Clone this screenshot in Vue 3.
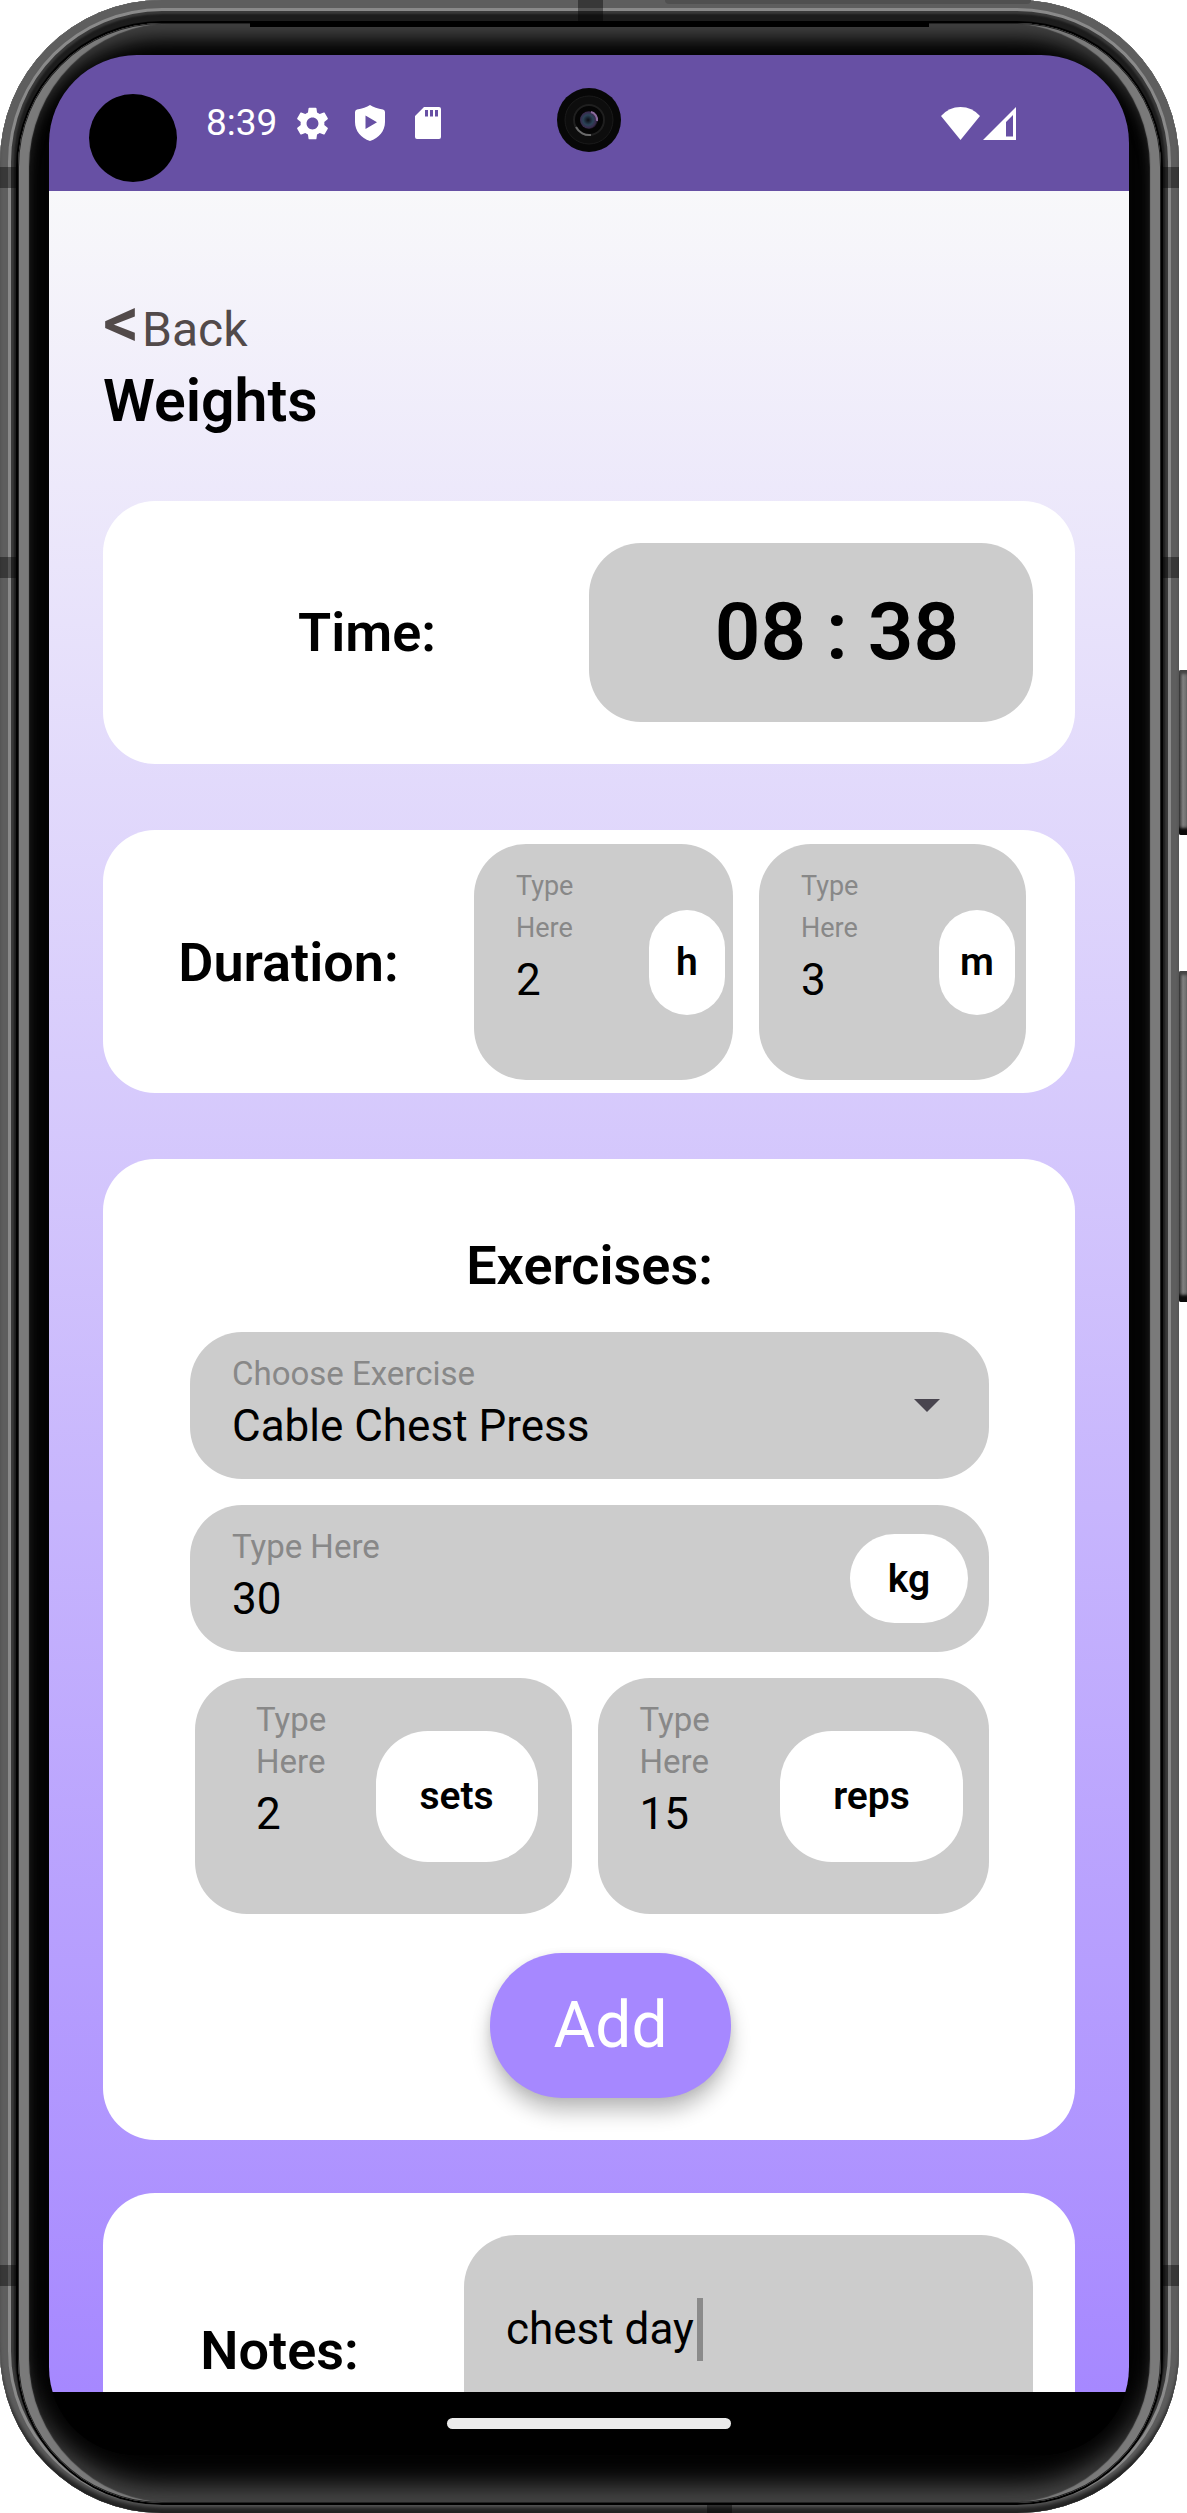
<script setup>
import { ref } from 'vue'

const hours = ref('2')
const minutes = ref('3')
const exercise = ref('Cable Chest Press')
const weight = ref('30')
const sets = ref('2')
const reps = ref('15')
const notes = ref('chest day')
</script>

<template>
  <div class="stage">
    <div class="phone">
      <i class="seam seam-left seam-1"></i>
      <i class="seam seam-left seam-2"></i>
      <i class="seam seam-left seam-3"></i>
      <i class="seam seam-right seam-1"></i>
      <i class="seam seam-right seam-2"></i>
      <i class="seam seam-right seam-3"></i>
      <i class="seam seam-top"></i>
      <i class="seam seam-bottom"></i>
      <i class="strip"></i>
      <i class="side-button power"></i>
      <i class="side-button volume"></i>

      <div class="bezel">
        <i class="earpiece"></i>
        <div class="screen">
          <header class="status">
            <i class="cutout"></i>
            <span class="clock">8:39</span>
            <svg class="gear" viewBox="2 2 20 20" aria-hidden="true">
              <path fill="#fff" d="M19.14 12.94c.04-.3.06-.61.06-.94 0-.32-.02-.64-.07-.94l2.03-1.58c.18-.14.23-.41.12-.61l-1.92-3.32c-.12-.22-.37-.29-.59-.22l-2.39.96c-.5-.38-1.03-.7-1.62-.94l-.36-2.54c-.04-.24-.24-.41-.48-.41h-3.84c-.24 0-.43.17-.47.41l-.36 2.54c-.59.24-1.13.57-1.62.94l-2.39-.96c-.22-.08-.47 0-.59.22L2.74 8.87c-.12.21-.08.47.12.61l2.03 1.58c-.05.3-.09.63-.09.94s.02.64.07.94l-2.03 1.58c-.18.14-.23.41-.12.61l1.92 3.32c.12.22.37.29.59.22l2.39-.96c.5.38 1.03.7 1.62.94l.36 2.54c.05.24.24.41.48.41h3.84c.24 0 .44-.17.47-.41l.36-2.54c.59-.24 1.13-.56 1.62-.94l2.39.96c.22.08.47 0 .59-.22l1.92-3.32c.12-.22.07-.47-.12-.61l-2.01-1.58zM12 15.6c-1.98 0-3.6-1.62-3.6-3.6s1.62-3.6 3.6-3.6 3.6 1.62 3.6 3.6-1.62 3.6-3.6 3.6z" />
            </svg>
            <svg class="shield" viewBox="0 0 30 36" aria-hidden="true">
              <path fill="#fff" fill-rule="evenodd" d="M15 0Q20 3 28 4.500Q30 5 30 7V17C30 26 24 33 15 36C6 33 0 26 0 17V7Q0 5 2 4.500Q10 3 15 0ZM10.500 10.500V24L22 17.200Z" />
            </svg>
            <svg class="sdcard" viewBox="0 0 26 32" aria-hidden="true">
              <path fill="#fff" fill-rule="evenodd" d="M9 0H24Q26 0 26 2V30Q26 32 24 32H2Q0 32 0 30V9ZM10 3V9.500H13V3ZM15 3V9.500H18V3ZM20 3V9.500H23V3Z" />
            </svg>
            <svg class="lens" viewBox="0 0 64 64" aria-hidden="true">
              <defs>
                <radialGradient id="glass" cx="45%" cy="50%" r="55%">
                  <stop offset="0" stop-color="#0b0b12" />
                  <stop offset="0.5" stop-color="#2a4256" />
                  <stop offset="0.8" stop-color="#3a2b4d" />
                  <stop offset="1" stop-color="#0a0a0e" />
                </radialGradient>
              </defs>
              <circle cx="32" cy="32" r="32" fill="#070707" />
              <circle cx="32" cy="32" r="24" fill="#0d0d0d" stroke="#1a1a1a" stroke-width="1" />
              <circle cx="32" cy="32" r="15" fill="#050505" stroke="#1f1f1f" stroke-width="2" />
              <path d="M19 39A15 15 0 0 0 34 47" fill="none" stroke="#6a6a6a" stroke-width="2" />
              <circle cx="32" cy="32" r="9" fill="url(#glass)" />
              <path d="M34 24A8 8 0 0 1 40 33" fill="none" stroke="#8a6a9c" stroke-width="2" />
            </svg>
            <svg class="wifi" viewBox="0 0 39 33" aria-hidden="true">
              <path fill="#fff" d="M0 9Q8 0 19.500 0T39 9L19.500 33Z" />
            </svg>
            <svg class="signal" viewBox="0 0 33 33" aria-hidden="true">
              <path fill="#fff" fill-rule="evenodd" d="M33 0V33H0ZM30 8L23 15V29.500H30Z" />
            </svg>
          </header>

          <main class="content">
            <a class="back" href="#"><span class="chevron">&lt;</span>Back</a>
            <h1>Weights</h1>

            <section class="card time-card">
              <h2>Time:</h2>
              <time class="time-box" datetime="08:38">08 : 38</time>
            </section>

            <section class="card duration-card">
              <h2>Duration:</h2>
              <div class="field tall hours">
                <div class="entry">
                  <label class="small" for="hours">Type<br>Here</label>
                  <input id="hours" v-model="hours" type="text">
                </div>
                <span class="unit">h</span>
              </div>
              <div class="field tall minutes">
                <div class="entry">
                  <label class="small" for="minutes">Type<br>Here</label>
                  <input id="minutes" v-model="minutes" type="text">
                </div>
                <span class="unit">m</span>
              </div>
            </section>

            <section class="card exercise-card">
              <h2>Exercises:</h2>
              <div class="field choose">
                <div class="entry">
                  <label for="exercise">Choose Exercise</label>
                  <select id="exercise" v-model="exercise">
                    <option>Cable Chest Press</option>
                  </select>
                </div>
                <svg class="arrow" viewBox="0 0 26 13" aria-hidden="true">
                  <path fill="#49454f" d="M0 0H26L13 13Z" />
                </svg>
              </div>
              <div class="field weight">
                <div class="entry">
                  <label for="weight">Type Here</label>
                  <input id="weight" v-model="weight" type="text">
                </div>
                <span class="unit">kg</span>
              </div>
              <div class="pair">
                <div class="field tall sets">
                  <div class="entry">
                    <label for="sets">Type<br>Here</label>
                    <input id="sets" v-model="sets" type="text">
                  </div>
                  <span class="unit">sets</span>
                </div>
                <div class="field tall reps">
                  <div class="entry">
                    <label for="reps">Type<br>Here</label>
                    <input id="reps" v-model="reps" type="text">
                  </div>
                  <span class="unit">reps</span>
                </div>
              </div>
              <div class="actions">
                <button class="add" type="button">Add</button>
              </div>
            </section>

            <section class="card notes-card">
              <h2><label for="notes">Notes:</label></h2>
              <div class="notes-box">
                <textarea id="notes" v-model="notes" rows="2"></textarea>
                <i class="caret"></i>
              </div>
            </section>
          </main>

          <footer class="nav"><i class="home"></i></footer>
        </div>
      </div>
    </div>
  </div>
</template>

<style>
body {
  background: #fff;
}
</style>

<style scoped>
* {
  box-sizing: border-box;
}

.stage {
  padding-right: 8px;
  font-family: Roboto, "Liberation Sans", sans-serif;
  color: #000;
}

/* Device shell */
.phone {
  position: relative;
  padding: 23px 18px 10px;
  border-radius: 162px;
  background: #1c1c1c;
  box-shadow:
    inset 0 -8px 4px -2px #222,
    inset 0 0 0 8px #5e5e5e,
    inset 0 0 0 11px #8a8a8a,
    inset 0 0 2px 14px #3a3a3a;
}

.seam {
  position: absolute;
  background: rgba(0, 0, 0, 0.4);
}

.seam-left {
  left: 0;
  width: 16px;
  height: 21px;
}

.seam-right {
  right: 0;
  width: 16px;
  height: 21px;
}

.seam-1 {
  top: 167px;
}

.seam-2 {
  top: 557px;
}

.seam-3 {
  bottom: 227px;
}

.seam-top {
  top: 0;
  left: 49%;
  width: 25px;
  height: 22px;
}

.seam-bottom {
  bottom: 0;
  left: 60%;
  width: 25px;
  height: 9px;
}

.strip {
  position: absolute;
  top: 0;
  right: 148px;
  width: 366px;
  height: 4px;
  border-radius: 0 0 20px 20px;
  background: #505050;
}

.side-button {
  position: absolute;
  right: -8px;
  width: 8px;
  border-radius: 2px 0 0 2px;
  background: linear-gradient(90deg, #333, #808080 4px, #6a6a6a);
  box-shadow: inset 0 6px 3px -2px #444, inset 0 -9px 3px -2px #0a0a0a;
}

.power {
  top: 670px;
  height: 165px;
}

.volume {
  top: 971px;
  height: 331px;
}

.bezel {
  position: relative;
  padding: 32px 32px 48px 31px;
  border-radius: 144px;
  background: #030303;
  box-shadow:
    0 0 0 2px #000,
    inset 0 0 0 1px #222,
    inset 11px 0 1px #7a7a7a,
    inset -11px 0 1px #7a7a7a,
    inset 0 16px 18px #404040,
    inset 0 -18px 24px #484848;
}

.earpiece {
  position: absolute;
  top: 0;
  left: 232px;
  right: 232px;
  height: 4px;
  background: #000;
}

.screen {
  overflow: hidden;
  border-radius: 88px;
  background: #000;
}

/* Status bar */
.status {
  position: relative;
  display: flex;
  align-items: center;
  height: 136px;
  padding: 0 113px 0 40px;
  background: #6750a4;
}

.cutout {
  width: 88px;
  height: 88px;
  margin: 29px 29px 0 0;
  border-radius: 50%;
  background: #000;
}

.clock {
  width: 90px;
  color: #fff;
  font-size: 37px;
  line-height: 44px;
}

.gear {
  width: 33px;
  height: 33px;
}

.shield {
  width: 30px;
  height: 36px;
  margin-left: 26px;
}

.sdcard {
  width: 26px;
  height: 32px;
  margin-left: 30px;
}

.lens {
  position: absolute;
  top: 33px;
  left: calc(50% - 32px);
  width: 64px;
  height: 64px;
}

.wifi {
  width: 39px;
  height: 33px;
  margin-left: auto;
}

.signal {
  width: 33px;
  height: 33px;
  margin-left: 3px;
}

/* Page */
.content {
  padding: 107px 5% 0;
  overflow: hidden;
  background: linear-gradient(#f8f8fa, #a688ff);
}

.back {
  display: flex;
  width: max-content;
  color: #524a4a;
  font-size: 48px;
  line-height: 63px;
  text-decoration: none;
}

.chevron {
  width: 39px;
  font-size: 72px;
  font-weight: 500;
  line-height: 50px;
}

h1 {
  margin: 0 0 60px;
  font-size: 59px;
  font-weight: 600;
  line-height: 80px;
}

h2 {
  margin: 0;
  font-size: 54px;
  font-weight: 600;
  line-height: 63px;
  text-align: center;
}

.card {
  border-radius: 52px;
  background: #fff;
}

.time-card,
.duration-card,
.notes-card {
  display: grid;
  align-items: center;
}

.time-card {
  grid-template-columns: minmax(0, 1fr) minmax(0, 1fr);
  padding: 42px;
}

.time-box {
  padding: 42px 0 42px 52px;
  border-radius: 52px;
  background: #ccc;
  font-size: 80px;
  font-weight: 600;
  line-height: 95px;
  text-align: center;
}

/* Entry fields */
.field {
  display: flex;
  align-items: center;
  min-width: 0;
  padding-left: 42px;
  border-radius: 52px;
  background: #ccc;
}

.entry {
  flex: 1;
  min-width: 0;
  padding: 21px 0;
}

.tall .entry {
  padding-bottom: 68px;
}

.entry label {
  display: block;
  color: #888;
  font-size: 33px;
  line-height: 42px;
}

.entry .small {
  font-size: 27px;
}

input,
select,
textarea {
  display: block;
  width: 100%;
  margin: 0;
  padding: 0;
  border: 0;
  outline: 0;
  background: transparent;
  color: #000;
  font-family: inherit;
  font-size: 44px;
  line-height: 63px;
}

input,
select {
  height: 63px;
}

select {
  appearance: none;
}

.unit {
  display: flex;
  align-items: center;
  justify-content: center;
  height: 131px;
  border-radius: 52px;
  background: #fff;
  font-size: 39px;
  font-weight: 600;
}

.duration-card {
  grid-template-columns: minmax(0, 371fr) minmax(0, 259fr) minmax(0, 267fr);
  margin-top: 66px;
  padding: 14px 49px 13px 0;
}

.hours {
  padding-right: 8px;
}

.minutes {
  padding-right: 11px;
}

.duration-card .field + .field {
  margin-left: 26px;
}

.duration-card {
  grid-template-columns: minmax(0, 371fr) minmax(0, 259fr) minmax(0, 293fr);
}

.duration-card .unit {
  width: 76px;
  height: 105px;
}

.exercise-card {
  margin-top: 66px;
  padding: 75px 86px 42px 87px;
}

.exercise-card h2 {
  margin-bottom: 35px;
}

.choose {
  padding-right: 49px;
}

.arrow {
  width: 26px;
  height: 13px;
}

.weight {
  margin-top: 26px;
  padding-right: 21px;
}

.weight .unit {
  width: 118px;
  height: 89px;
}

.pair {
  display: grid;
  grid-template-columns: minmax(0, 377fr) minmax(0, 392fr);
  gap: 26px;
  margin-top: 26px;
  padding-left: 5px;
}

.sets {
  padding: 0 34px 0 61px;
}

.reps {
  padding-right: 26px;
}

.sets .unit {
  width: 162px;
}

.reps .unit {
  width: 183px;
}

.actions {
  display: flex;
  justify-content: center;
  margin-top: 39px;
  padding-left: 42px;
}

.add {
  width: 241px;
  height: 145px;
  padding: 0;
  border: 0;
  border-radius: 72px;
  background: #a688ff;
  box-shadow: 0 14px 20px rgba(0, 0, 0, 0.24), 0 2px 10px rgba(0, 0, 0, 0.08);
  color: #fff;
  font-family: inherit;
  font-size: 64px;
}

/* Scrolls on below the navigation bar */
.notes-card {
  grid-template-columns: minmax(0, 361fr) minmax(0, 569fr);
  margin: 53px 0 -115px;
  padding: 42px 42px 42px 0;
}

.notes-card h2 {
  padding-right: 8px;
}

.notes-box {
  position: relative;
  padding: 63px 42px 41px;
  border-radius: 52px;
  background: #ccc;
}

textarea {
  resize: none;
}

.caret {
  position: absolute;
  top: 63px;
  left: 233px;
  width: 6px;
  height: 63px;
  background: #8a8a8a;
}

.nav {
  display: flex;
  justify-content: center;
  height: 63px;
  padding-top: 26px;
  background: #000;
}

.home {
  width: 284px;
  height: 11px;
  border-radius: 6px;
  background: #ebebeb;
}
</style>
